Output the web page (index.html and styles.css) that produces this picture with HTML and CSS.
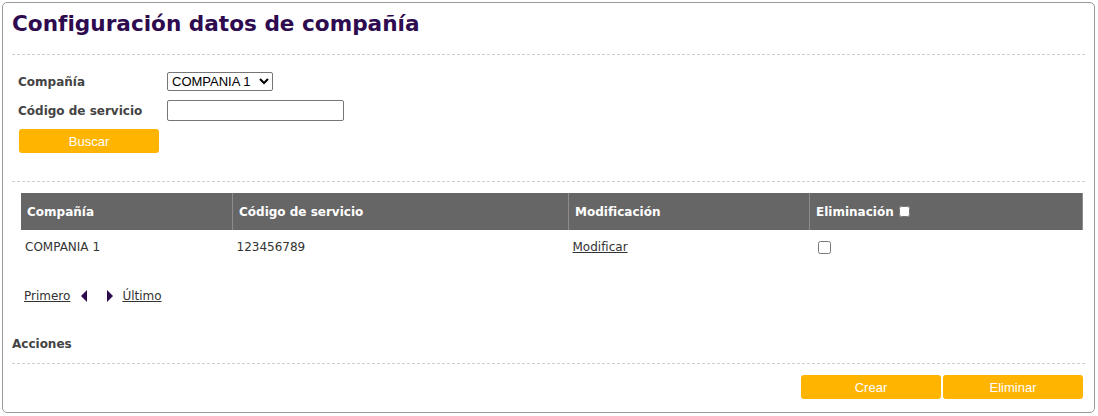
FILE: index.html
```html
<!DOCTYPE html>
<html lang="es">
<head>
    <meta charset="UTF-8">
    <title>Configuración datos de compañía</title>
    <link rel="stylesheet" href="styles.css">
</head>
<body>

<div class="panel">
    <h1 class="page-title">Configuración datos de compañía</h1>

    <!-- Filtros de busqueda -->
    <div class="search">
        <div class="form-row">
            <label for="company">Compañía</label>
            <select id="company" class="select-company">
                <option>COMPANIA 1</option>
            </select>
        </div>
        <div class="form-row">
            <label for="service">Código de servicio</label>
            <input type="text" id="service" class="input-service">
        </div>
        <button class="btn btn-search">Buscar</button>
    </div>

    <!-- Resultados -->
    <table class="results">
        <thead>
            <tr>
                <th class="col-company">Compañía</th>
                <th class="col-code">Código de servicio</th>
                <th class="col-mod">Modificación</th>
                <th class="col-del">Eliminación <input type="checkbox" class="check-all"></th>
            </tr>
        </thead>
        <tbody>
            <tr>
                <td>COMPANIA 1</td>
                <td>123456789</td>
                <td><a href="#">Modificar</a></td>
                <td><input type="checkbox" class="check-row"></td>
            </tr>
        </tbody>
    </table>

    <div class="pager">
        <a href="#">Primero</a>
        <span class="arrow arrow-left"></span>
        <span class="arrow arrow-right"></span>
        <a href="#">Último</a>
    </div>

    <h3 class="actions-title">Acciones</h3>
    <div class="actions">
        <button class="btn">Crear</button>
        <button class="btn">Eliminar</button>
    </div>
</div>

</body>
</html>
```
FILE: styles.css
```css
body {
    margin: 0;
    font-family: "DejaVu Sans", Verdana, sans-serif;
    font-size: 12px;
    color: #333;
    background: #fff;
}
.panel {
    margin: 2px 3px 2px 2px;
    border: 1px solid #9a9a9a;
    border-radius: 5px;
    padding: 0 9px 13px 9px;
}
.page-title {
    margin: 0;
    padding: 8px 0 18px;
    font-size: 21.6px;
    line-height: 25px;
    color: #2e0b4f;
    border-bottom: 1px dashed #cfcfcf;
}
.search {
    padding: 17px 0 28px;
    border-bottom: 1px dashed #cfcfcf;
}
.form-row {
    display: flex;
    align-items: center;
    margin-bottom: 9px;
}
.form-row label {
    width: 149px;
    padding-left: 6px;
    font-weight: bold;
    color: #444;
}
.select-company {
    width: 106px;
    height: 19px;
    padding: 0;
    font-family: "Liberation Sans", Arial, sans-serif;
    font-size: 13px;
    color: #000;
    border: 1px solid #767676;
    border-radius: 2px;
    background: #fff;
}
.input-service {
    width: 177px;
    height: 21px;
    box-sizing: border-box;
    border: 1px solid #767676;
    border-radius: 2px;
}
.btn {
    width: 140px;
    height: 24px;
    background-color: #ffb400;
    color: white;
    border: none;
    border-radius: 3px;
    font-family: "Liberation Sans", Arial, sans-serif;
    font-size: 13px;
    cursor: pointer;
}
.btn-search {
    margin: -1px 0 0 7px;
    display: block;
}
.results {
    width: 1062px;
    margin: 11px 0 0 9px;
    border-collapse: collapse;
}
.results th {
    height: 37px;
    padding: 0 0 0 6px;
    background: #666;
    color: white;
    text-align: left;
    border: 1px solid #8c8c8c;
    border-top: none;
    border-bottom: none;
}
.results th:first-child {
    border-left: none;
}
.results td {
    height: 30px;
    padding: 2px 0 0 4px;
    color: #333;
}
.results a {
    color: #333;
}
.col-company { width: 205px; }
.col-code { width: 329px; }
.col-mod { width: 234px; }
.check-all {
    margin: 0 0 0 1px;
    width: 11px;
    height: 11px;
    vertical-align: -1px;
}
.check-row {
    margin: 3px 0 0 4px;
}
.pager {
    margin: 26px 0 0 12px;
    line-height: 16px;
    display: flex;
    align-items: center;
}
.pager a {
    color: #333;
}
.arrow {
    width: 0;
    height: 0;
    border-top: 6px solid transparent;
    border-bottom: 6px solid transparent;
}
.arrow-left {
    margin-left: 11px;
    border-right: 6px solid #2e0b4f;
}
.arrow-right {
    margin: 0 9px 0 20px;
    border-left: 6px solid #2e0b4f;
}
.actions-title {
    margin: 32px 0 0;
    font-size: 12px;
    line-height: 16px;
    color: #444;
    padding-bottom: 11px;
    border-bottom: 1px dashed #cfcfcf;
}
.actions {
    margin: 11px 2px 0 0;
    display: flex;
    justify-content: flex-end;
    gap: 2px;
}
```
